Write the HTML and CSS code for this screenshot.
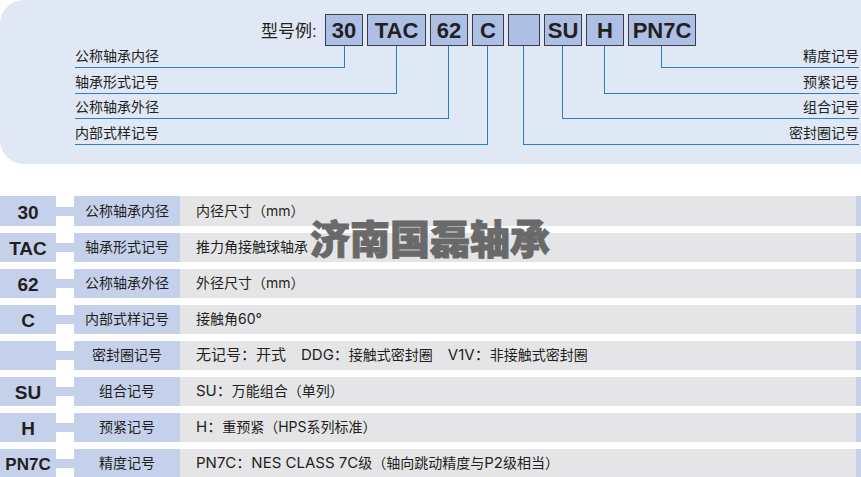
FILE: index.html
```html
<!DOCTYPE html>
<html lang="zh-CN">
<head>
    <meta charset="UTF-8">
    <meta name="viewport" content="width=device-width, initial-scale=1.0">
    <title>轴承型号例</title>
    <link rel="stylesheet" href="styles.css">
</head>
<body>

<section class="model">
    <div class="model-row">
        <span class="model-title">型号例:</span>
        <span class="box box-2">30</span>
        <span class="box box-3">TAC</span>
        <span class="box box-2">62</span>
        <span class="box box-1">C</span>
        <span class="box box-1"></span>
        <span class="box box-2">SU</span>
        <span class="box box-2">H</span>
        <span class="box box-4">PN7C</span>
    </div>
    <div class="leads">
        <span class="lead left l1">公称轴承内径</span>
        <span class="lead left l2">轴承形式记号</span>
        <span class="lead left l3">公称轴承外径</span>
        <span class="lead left l4">内部式样记号</span>
        <span class="lead right r1">精度记号</span>
        <span class="lead right r2">预紧记号</span>
        <span class="lead right r3">组合记号</span>
        <span class="lead right r4">密封圈记号</span>
    </div>
</section>

<div class="specs-wrap">
    <table class="specs">
        <tr class="first">
            <th class="code" scope="row">30</th>
            <td class="link"></td>
            <td class="name">公称轴承内径</td>
            <td class="desc">内径尺寸（mm）</td>
        </tr>
        <tr>
            <th class="code" scope="row">TAC</th>
            <td class="link"></td>
            <td class="name">轴承形式记号</td>
            <td class="desc">推力角接触球轴承</td>
        </tr>
        <tr>
            <th class="code" scope="row">62</th>
            <td class="link"></td>
            <td class="name">公称轴承外径</td>
            <td class="desc">外径尺寸（mm）</td>
        </tr>
        <tr>
            <th class="code" scope="row">C</th>
            <td class="link"></td>
            <td class="name">内部式样记号</td>
            <td class="desc">接触角60°</td>
        </tr>
        <tr>
            <th class="code" scope="row"></th>
            <td class="link"></td>
            <td class="name">密封圈记号</td>
            <td class="desc"><span class="latin">无记号：开式　DDG：</span>接触式密封圈<span class="latin">　V1V：</span>非接触式密封圈</td>
        </tr>
        <tr>
            <th class="code" scope="row">SU</th>
            <td class="link"></td>
            <td class="name">组合记号</td>
            <td class="desc"><span class="latin">SU：</span>万能组合（单列）</td>
        </tr>
        <tr>
            <th class="code" scope="row">H</th>
            <td class="link"></td>
            <td class="name">预紧记号</td>
            <td class="desc"><span class="latin">H：</span>重预紧（HPS系列标准）</td>
        </tr>
        <tr>
            <th class="code code-long" scope="row">PN7C</th>
            <td class="link"></td>
            <td class="name">精度记号</td>
            <td class="desc"><span class="latin">PN7C：NES CLASS 7C</span>级（轴向跳动精度与<span class="latin">P2</span>级相当）</td>
        </tr>
    </table>
    <div class="watermark">济南国磊轴承</div>
</div>

</body>
</html>
```

FILE: styles.css
```css
* {
    box-sizing: border-box;
}
body {
    margin: 0;
    overflow: hidden;
    background: #fff;
    color: #231f20;
    font-family: "Liberation Sans", "Noto Sans CJK SC", sans-serif;
    font-size: 14px;
}

/* model number example */
.model {
    padding: 14px 2px 19px 75px;
    background: #e0e7f5;
    border-radius: 24px 0 0 24px;
}
.model-row {
    display: flex;
    align-items: flex-start;
    gap: 4px;
    height: 32px;
    padding-left: 186px;
}
.model-title {
    width: 60px;
    font-size: 17px;
    line-height: 35px;
    white-space: nowrap;
}
.box {
    height: 32px;
    border: 1px solid #3c3d48;
    background: #adbfe4;
    font-size: 22px;
    font-weight: bold;
    line-height: 31px;
    text-align: center;
}
.box-1 {
    width: 32px;
}
.box-2 {
    width: 38px;
}
.box-3 {
    width: 59px;
}
.box-4 {
    width: 68px;
}

/* each lead is a label with an elbow line up to its box */
.leads {
    display: grid;
    grid-template-columns: 270px 52px 52px 39px 35px 39px 42px 57px 1fr;
    grid-template-rows: 22px 26px 25px 26px;
}
.lead {
    display: flex;
    align-items: flex-end;
    border-bottom: 1px solid #2a7fc1;
    line-height: 21px;
}
.left {
    border-right: 1px solid #2a7fc1;
}
.right {
    justify-content: flex-end;
    border-left: 1px solid #2a7fc1;
}
.l1 {
    grid-area: 1 / 1 / 2 / 2;
}
.l2 {
    grid-area: 1 / 1 / 3 / 3;
}
.l3 {
    grid-area: 1 / 1 / 4 / 4;
}
.l4 {
    grid-area: 1 / 1 / 5 / 5;
}
.r1 {
    grid-area: 1 / 9 / 2 / 10;
}
.r2 {
    grid-area: 1 / 8 / 3 / 10;
}
.r3 {
    grid-area: 1 / 7 / 4 / 10;
}
.r4 {
    grid-area: 1 / 6 / 5 / 10;
}

/* code table */
.specs-wrap {
    position: relative;
    margin-top: 25px;
}
.specs {
    width: 100%;
    table-layout: fixed;
    border-collapse: separate;
    border-spacing: 0 7px;
}
.specs th,
.specs td {
    height: 29px;
    padding: 0 0 1px;
    line-height: 20px;
    white-space: nowrap;
}
.specs .first th,
.specs .first td {
    height: 30px;
}
.specs .code {
    width: 56px;
    padding: 3px 0 0;
    background: #c5d1eb;
    font-size: 19px;
    text-align: center;
}
.specs .code-long {
    font-size: 17px;
}
.specs .link {
    width: 18px;
    background: linear-gradient(#c5d1eb, #c5d1eb) center / 100% 9px no-repeat;
}
.specs .name {
    width: 106px;
    background: #c5d1eb;
    text-align: center;
}
.specs .desc {
    padding-left: 16px;
    border-right: 5px solid #c5d1eb;
    background: #e5e5e7;
    font-family: Inter, "Noto Sans CJK SC", sans-serif;
}
.latin {
    font-size: 15px;
}
.watermark {
    position: absolute;
    top: 18px;
    left: 310px;
    color: #5c5c5c;
    font-family: "Noto Sans CJK SC", sans-serif;
    font-size: 40px;
    font-weight: 900;
    line-height: 60px;
    opacity: 0.9;
    -webkit-text-stroke: 1px #5c5c5c;
}
```
